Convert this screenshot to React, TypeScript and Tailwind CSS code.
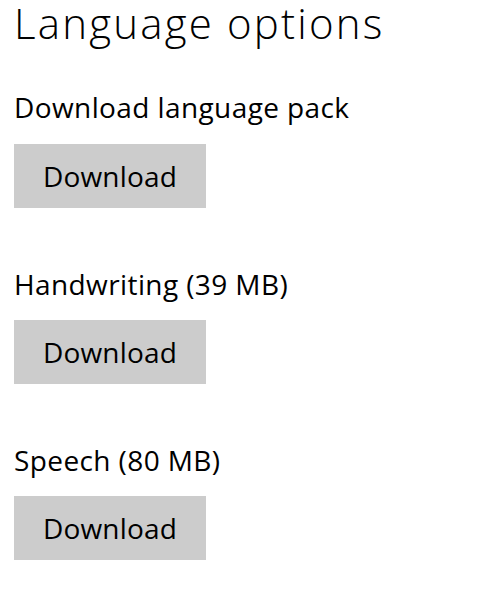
export default function App() {
  const sections = [
    { label: "Download language pack" },
    { label: "Handwriting (39 MB)" },
    { label: "Speech (80 MB)" },
  ];
  return (
    <div className="w-[494px] h-[594px] bg-white text-black pl-[14px] font-['Open_Sans',sans-serif] overflow-hidden">
      <h1 className="text-[42px] leading-[46px] font-light tracking-[2.2px] whitespace-nowrap">Language options</h1>
      <div className="flex flex-col">
        {sections.map((s, i) => (
          <div key={i} className={i === 0 ? "mt-[44px]" : "mt-[59px]"}>
            <div className="text-[28px] leading-[34px] tracking-[0.4px] whitespace-nowrap">{s.label}</div>
            <button className={(i === 0 ? "mt-[20px]" : "mt-[19px]") + " w-[192px] h-[64px] bg-[#cccccc] text-[28px] leading-[42px] flex items-center justify-center tracking-[0.2px]"}>
              Download
            </button>
          </div>
        ))}
      </div>
    </div>
  );
}
